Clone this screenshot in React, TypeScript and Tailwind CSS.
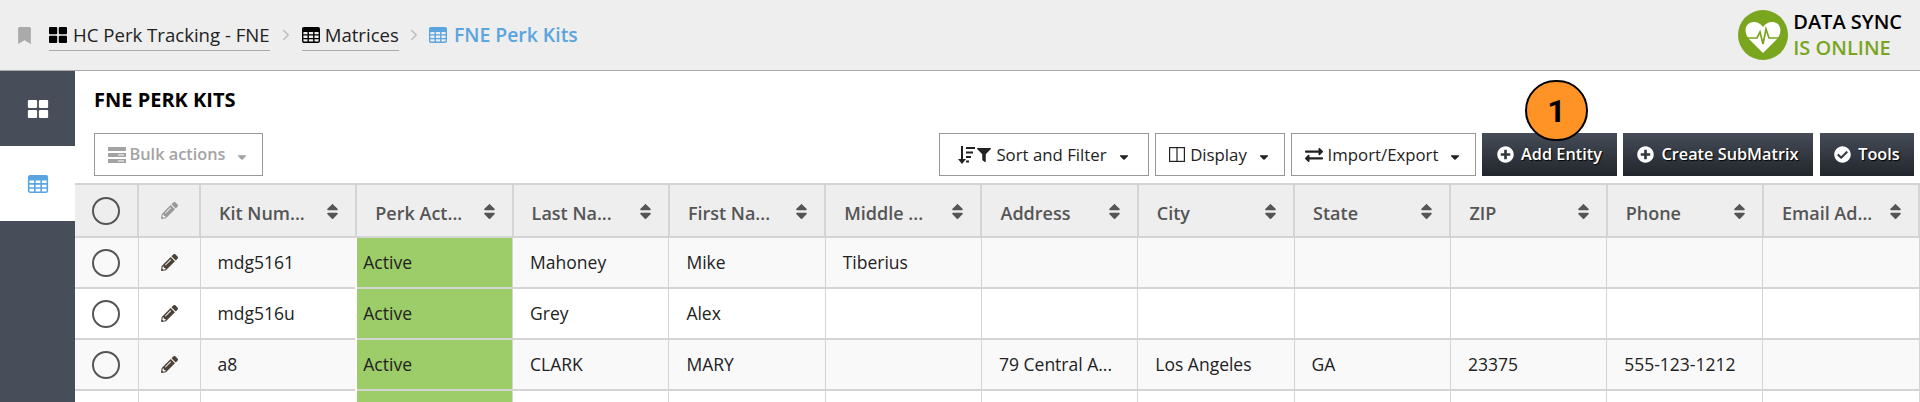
import React from 'react';
import { FaBookmark, FaCaretDown, FaCheckCircle, FaExchangeAlt, FaFilter, FaPencilAlt, FaPlusCircle, FaSort } from 'react-icons/fa';
import { FiChevronRight } from 'react-icons/fi';

const headers = ['Kit Num...', 'Perk Act...', 'Last Na...', 'First Na...', 'Middle ...', 'Address', 'City', 'State', 'ZIP', 'Phone', 'Email Ad...'];

const rows = [
  ['mdg5161', 'Active', 'Mahoney', 'Mike', 'Tiberius', '', '', '', '', '', ''],
  ['mdg516u', 'Active', 'Grey', 'Alex', '', '', '', '', '', '', ''],
  ['a8', 'Active', 'CLARK', 'MARY', '', '79 Central A...', 'Los Angeles', 'GA', '23375', '555-123-1212', ''],
  ['', '', '', '', '', '', '', '', '', '', ''],
];

// four rounded squares, the dashboard glyph
const QuadIcon = ({ className }: { className: string }) => (
  <svg viewBox="0 0 18 16" className={className} fill="currentColor">
    <rect x="0" y="0" width="8.2" height="7.2" rx="1" />
    <rect x="9.8" y="0" width="8.2" height="7.2" rx="1" />
    <rect x="0" y="8.8" width="8.2" height="7.2" rx="1" />
    <rect x="9.8" y="8.8" width="8.2" height="7.2" rx="1" />
  </svg>
);

const TableIcon = ({ className }: { className: string }) => (
  <svg viewBox="0 0 18 16" className={className} fill="none" stroke="currentColor" strokeWidth="1.4">
    <rect x="0.7" y="0.7" width="16.6" height="14.6" rx="1.4" />
    <path d="M0.7 4.2H17.3M0.7 7.9H17.3M0.7 11.6H17.3M6.2 4.2V15.3M11.8 4.2V15.3" />
    <rect x="0.7" y="0.7" width="16.6" height="3.5" fill="currentColor" stroke="none" />
  </svg>
);

const ServerIcon = () => (
  <svg viewBox="0 0 18 16" className="w-[18px] h-[16px] mr-[4px]" fill="currentColor">
    <path d="M0 0H18V4H0ZM0 6H18V10H0ZM0 12H18V16H0Z" />
    <path d="M10 7.4H16V8.6H10ZM10 13.4H16V14.6H10Z" fill="#fff" />
  </svg>
);

const SortLinesIcon = () => (
  <svg viewBox="0 0 18 18" className="w-[18px] h-[18px]" fill="currentColor">
    <path d="M4 0H6V13H9L5 18L1 13H4Z" />
    <path d="M9 1H18V3H9ZM9 5.5H16V7.5H9ZM9 10H14V12H9ZM9 14.5H12V16.5H9Z" />
  </svg>
);

const ColumnsIcon = () => (
  <svg viewBox="0 0 16 15" className="w-[16px] h-[15px]" fill="none" stroke="currentColor" strokeWidth="1.2">
    <rect x="0.6" y="0.6" width="14.8" height="13.8" />
    <path d="M8 0.6V14.4" />
  </svg>
);

const HeartIcon = () => (
  <svg width="50" height="50" viewBox="0 0 50 50">
    <circle cx="25" cy="25" r="25" fill="#7aa51f" />
    <path d="M25 43 L11 29 C5 22 7 12 16 12 C20 12 23 14 25 17 C27 14 30 12 34 12 C43 12 45 22 39 29 Z" fill="#fff" />
    <path d="M8 28 H19 L22 22 L25 34 L28 19 L31 28 H42" fill="none" stroke="#7aa51f" strokeWidth="1.7" />
  </svg>
);

const OutlineButton = ({ icon, label, className }: { icon: React.ReactNode; label: string; className: string }) => (
  <button className={`h-[43px] border border-[#999] bg-white flex items-center justify-center text-[16.8px] text-[#222] ${className}`}>
    {icon}
    <span className="ml-[5px]">{label}</span>
    <FaCaretDown className="ml-[10px] mt-[5px] text-[14px] text-[#222]" />
  </button>
);

const DarkButton = ({ icon, label, className }: { icon: React.ReactNode; label: string; className: string }) => (
  <button className={`h-[43px] bg-gradient-to-b from-[#464d58] to-[#22262c] flex items-center justify-center gap-[7px] text-[16.3px] font-semibold text-white [text-shadow:1px_1px_1px_#000] ${className}`}>
    {icon}
    {label}
  </button>
);

const Radio = () => <div className="w-[28px] h-[28px] rounded-full border-2 border-[#555] mx-auto" />;

export default function App() {
  return (
    <div className="w-[1920px] h-[402px] overflow-hidden bg-white font-['Open_Sans',sans-serif]">
      <header className="h-[71px] bg-[#eeeeee] border-b border-[#aaaaaa] flex items-center justify-between pl-[17px] pr-[18px]">
        <nav className="flex items-center text-[18.6px] text-[#222]">
          <FaBookmark className="w-[15px] h-[17px] text-[#aaaaaa] mr-[17px]" />
          <a className="flex items-center gap-[6px] h-[31px] border-b border-[#aaa]">
            <QuadIcon className="w-[18px] h-[16px] text-black" />
            HC Perk Tracking - FNE
          </a>
          <FiChevronRight className="mx-[7px] text-[#bbb] text-[18px]" />
          <a className="flex items-center gap-[5px] h-[31px] border-b border-[#aaa]">
            <TableIcon className="w-[18px] h-[16px] text-black" />
            Matrices
          </a>
          <FiChevronRight className="mx-[6px] text-[#bbb] text-[18px]" />
          <span className="flex items-center gap-[7px] font-semibold text-[#5aa5e0] text-[19.4px]">
            <TableIcon className="w-[18px] h-[16px]" />
            FNE Perk Kits
          </span>
        </nav>
        <div className="flex items-center gap-[5px]">
          <HeartIcon />
          <div className="text-[20px] font-semibold leading-[26px] text-black">
            <div>DATA SYNC</div>
            <div className="text-[#7aa51f]">IS ONLINE</div>
          </div>
        </div>
      </header>

      <div className="flex h-[331px]">
        <aside className="w-[75px] shrink-0 bg-[#474e59] flex flex-col">
          <div className="h-[75px] flex items-center justify-center text-white">
            <QuadIcon className="w-[22px] h-[18px]" />
          </div>
          <div className="h-[75px] bg-white flex items-center justify-center text-[#5aa5e0]">
            <TableIcon className="w-[22px] h-[18px]" />
          </div>
        </aside>

        <main className="flex-1 min-w-0 relative">
          <h1 className="pl-[19px] pt-[15px] text-[20px] leading-[28px] font-bold text-black">FNE PERK KITS</h1>

          <div className="flex justify-between mt-[19px] pl-[19px] pr-[6px]">
            <button className="h-[43px] w-[169px] border border-[#999] flex items-center justify-center text-[16.3px] font-semibold text-[#a3a3a3]">
              <ServerIcon />
              Bulk actions
              <FaCaretDown className="ml-[10px] mt-[5px] text-[14px]" />
            </button>
            <div className="flex gap-[6px]">
              <OutlineButton
                className="w-[210px]"
                icon={<><SortLinesIcon /><FaFilter className="text-[14px] ml-[2px]" /></>}
                label="Sort and Filter"
              />
              <OutlineButton className="w-[130px]" icon={<ColumnsIcon />} label="Display" />
              <OutlineButton className="w-[185px]" icon={<FaExchangeAlt className="text-[18px]" />} label="Import/Export" />
              <DarkButton className="w-[135px]" icon={<FaPlusCircle className="text-[17px]" />} label="Add Entity" />
              <DarkButton className="w-[190px]" icon={<FaPlusCircle className="text-[17px]" />} label="Create SubMatrix" />
              <DarkButton className="w-[94px] ml-[1px]" icon={<FaCheckCircle className="text-[17px]" />} label="Tools" />
            </div>
          </div>

          <div className="absolute left-[1450px] top-[9px] w-[63px] h-[61px] rounded-full bg-[#ff9326] border-2 border-black flex items-center justify-center font-['Roboto',sans-serif] font-bold text-[32px] text-black">
            1
          </div>

          <table className="mt-[7px] table-fixed border-collapse w-[1845px] text-[17.5px]">
            <colgroup>
              <col className="w-[63px]" />
              <col className="w-[62px]" />
              {headers.map(h => <col key={h} className="w-[156.3px]" />)}
            </colgroup>
            <thead>
              <tr className="h-[53px] bg-[#eeeeee] border-t-2 border-b-2 border-[#d4d4d4]">
                <th className="border-r-2 border-[#d4d4d4]"><Radio /></th>
                <th className="border-r-2 border-[#d4d4d4]"><FaPencilAlt className="mx-auto text-[17px] text-[#999]" /></th>
                {headers.map(h => (
                  <th key={h} className="border-r-2 border-[#d4d4d4] pl-[18px] pr-[13px] pt-[6px] text-left font-semibold text-[18px] text-[#555]">
                    <div className="flex items-center justify-between">
                      {h}
                      <FaSort className="text-[19px] -mt-[4px]" />
                    </div>
                  </th>
                ))}
              </tr>
            </thead>
            <tbody>
              {rows.map((row, i) => (
                <tr key={i} className={`h-[51px] border-b-2 border-[#d4d4d4] ${i % 2 === 0 ? 'bg-[#f9f9f9]' : 'bg-white'}`}>
                  <td className="border-r border-[#d4d4d4]"><Radio /></td>
                  <td className="border-r border-[#d4d4d4]"><FaPencilAlt className="mx-auto text-[17px] text-[#4d4238]" /></td>
                  {row.map((cell, j) => (
                    <td
                      key={j}
                      className={j === 1
                        ? 'border-r border-l-2 border-l-white border-r-[#d4d4d4] bg-[#9ccd68] pl-[6px] text-[#222]'
                        : 'border-r border-[#d4d4d4] pl-[17px] text-[#222]'}
                    >
                      {cell}
                    </td>
                  ))}
                </tr>
              ))}
            </tbody>
          </table>
        </main>
      </div>
    </div>
  );
}
